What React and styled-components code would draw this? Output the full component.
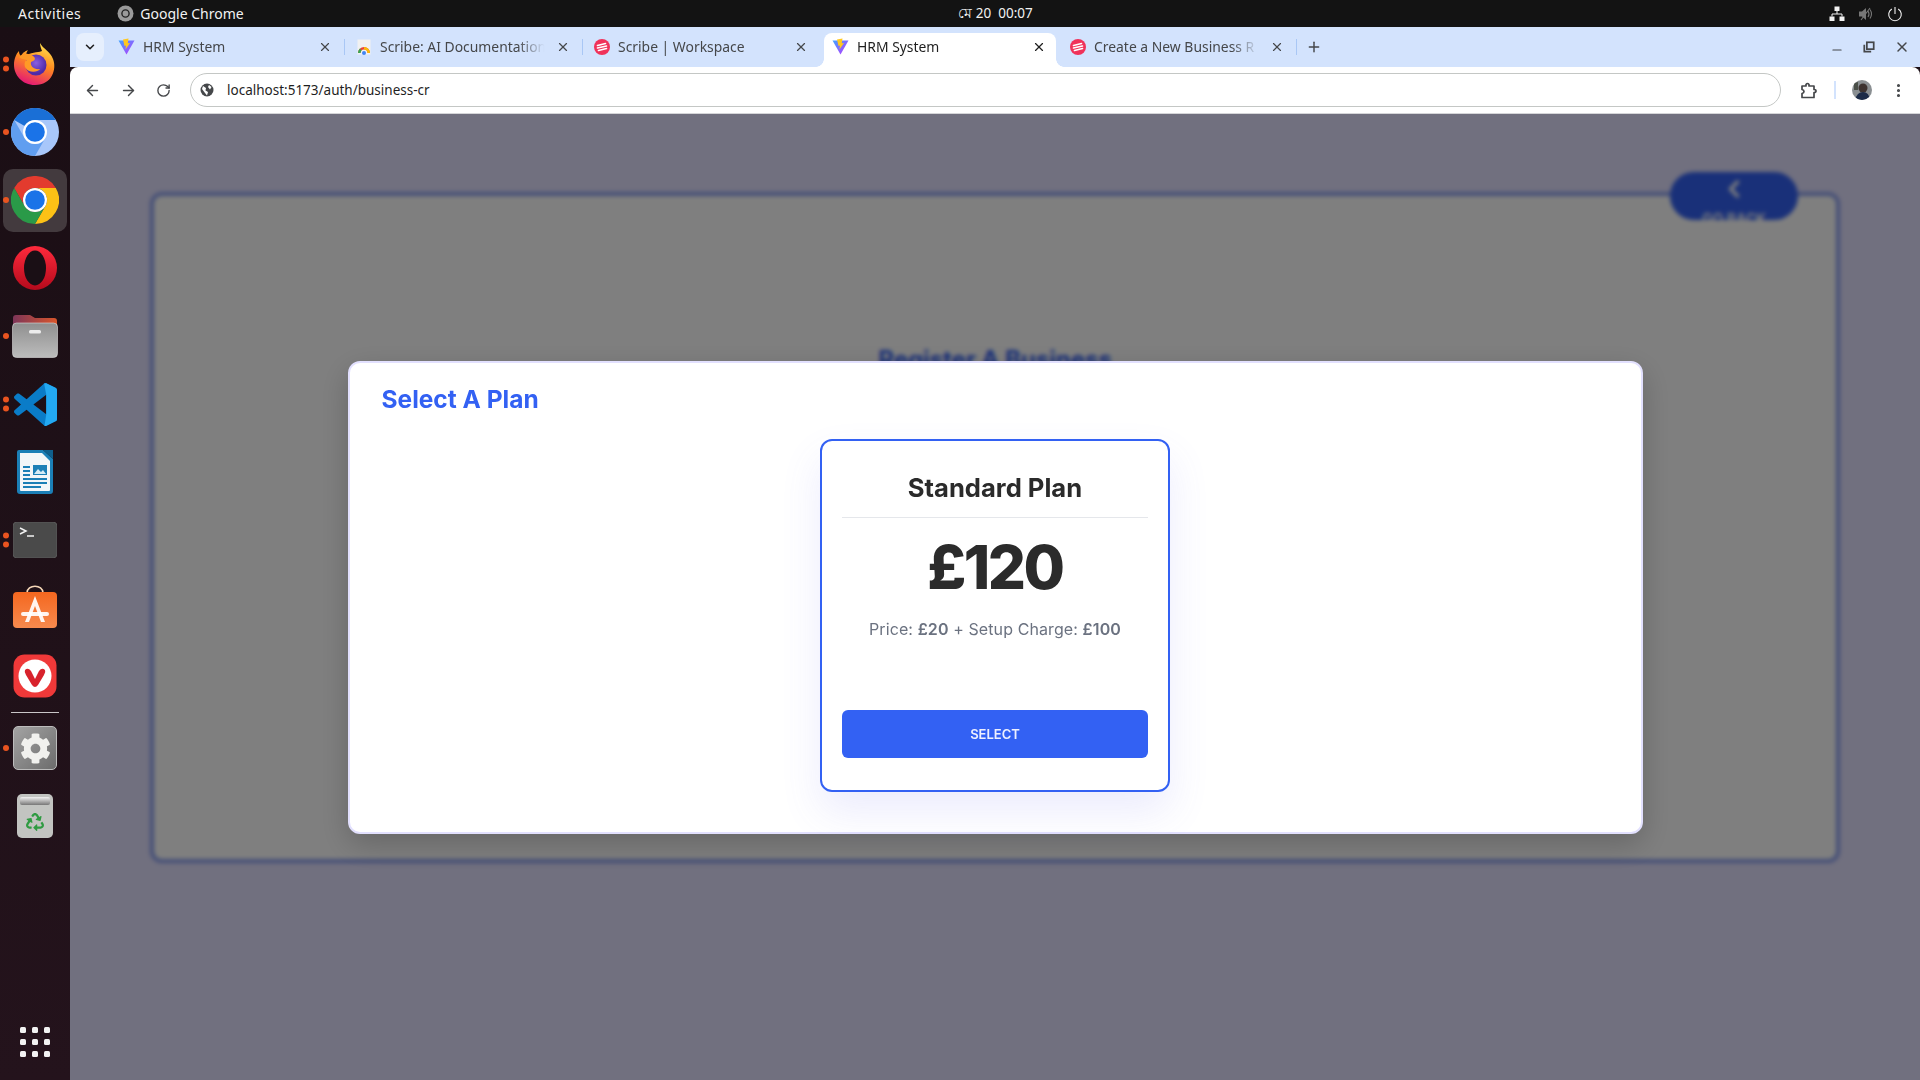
import styled, { createGlobalStyle } from "styled-components";
import { ArrowLeft, ArrowRight, RotateCw, X, Plus, ChevronDown, ChevronLeft, EllipsisVertical, Minus } from "lucide-react";
import { FaCog, FaRecycle } from "react-icons/fa";

const GlobalStyle = createGlobalStyle`
	* {
		box-sizing: border-box;
	}
	html, body {
		margin: 0;
		padding: 0;
		width: 1920px;
		height: 1080px;
		overflow: hidden;
		font-family: "Noto Sans", sans-serif;
	}
`;

const BLUE = "#3361f3";
const POPPINS = `"Inter", "Noto Sans", sans-serif`;

const ViteIcon = () => (
	<svg width="17" height="17" viewBox="0 0 17 17">
		<defs>
			<linearGradient id="viteA" x1="0" y1="0" x2="1" y2="1">
				<stop offset="0" stopColor="#41a4ff" />
				<stop offset="1" stopColor="#bd34fe" />
			</linearGradient>
		</defs>
		<path d="M0.5 2.5 L16.5 2.5 L8.5 16.5 Z" fill="url(#viteA)" />
		<path d="M10.5 0.5 L5 1.5 L6.5 8 L8 7.5 L7.5 11.5 L12 5 L9.8 5.3 Z" fill="#ffc81f" />
	</svg>
);

const ScribeIcon = () => (
	<svg width="16" height="16" viewBox="0 0 16 16">
		<circle cx="8" cy="8" r="8" fill="#f0325a" />
		<path d="M3.5 6.5 L11.5 4.5 M3.5 9 L12.5 7 M4.5 11.5 L12.5 9.5" stroke="#fff" strokeWidth="1.6" strokeLinecap="round" />
	</svg>
);

const DocsIcon = () => (
	<svg width="16" height="16" viewBox="0 0 16 16">
		<rect x="1.5" y="0.5" width="13" height="15" fill="#f1f1f1" />
		<path d="M2 14 A6 6 0 0 1 14 14 L11.5 14 A3.5 3.5 0 0 0 4.5 14 Z" fill="#ea4335" />
		<path d="M8 8 A6 6 0 0 1 14 14 L11.5 14 A3.5 3.5 0 0 0 8 10.5 Z" fill="#fbbc04" />
		<path d="M2 14 A6 6 0 0 1 4 9.6 L5.6 11.4 A3.5 3.5 0 0 0 4.5 14 Z" fill="#34a853" />
		<circle cx="8" cy="14" r="2" fill="#4285f4" />
	</svg>
);

const tabs = [
	{ title: "HRM System", icon: <ViteIcon />, divider: true },
	{ title: "Scribe: AI Documentation", icon: <DocsIcon />, divider: true },
	{ title: "Scribe | Workspace", icon: <ScribeIcon />, divider: false },
	{ title: "HRM System", icon: <ViteIcon />, active: true, divider: false },
	{ title: "Create a New Business R", icon: <ScribeIcon />, divider: true },
];

const Firefox = () => (
	<svg width="44" height="44" viewBox="0 0 44 44">
		<defs>
			<linearGradient id="ffA" x1="0.7" y1="0" x2="0.3" y2="1">
				<stop offset="0" stopColor="#ffe14d" />
				<stop offset="0.45" stopColor="#ff8a1f" />
				<stop offset="1" stopColor="#e3127a" />
			</linearGradient>
			<radialGradient id="ffB" cx="0.5" cy="0.4">
				<stop offset="0" stopColor="#8a5fe0" />
				<stop offset="1" stopColor="#4f2aa8" />
			</radialGradient>
		</defs>
		<path d="M27 1 C30 7 37 9 40 17 C44 27 39 43 22 43 C9 43 1 33 1 23 C1 17 3 12 6 9 C6 12 7 13 8 14 C10 10 13 9 15 8 C13 11 13 12 14 13 C19 10 28 10 29 9 C28 6 27 4 27 1 Z" fill="url(#ffA)" />
		<circle cx="23" cy="23" r="10.5" fill="url(#ffB)" />
		<path d="M6 15 C10 11 16 11 20 14 C24 17 21 19 18 20 C17 24 21 28 27 27 C24 31 15 31 12 25 C11 21 12 19 14 18 C11 17 8 17 6 15 Z" fill="#ff9a26" />
	</svg>
);

const Chromium = () => (
	<svg width="48" height="48" viewBox="0 0 48 48">
		<circle cx="24" cy="24" r="24" fill="#a8c7fa" />
		<path d="M3.2 12 A24 24 0 0 1 44.8 12 L24 12 A12 12 0 0 0 13.6 18 Z" fill="#1a6fd6" />
		<path d="M3.2 12 A24 24 0 0 0 24 48 L34.4 30 A12 12 0 0 1 13.6 30 Z" fill="#609ef0" />
		<circle cx="24" cy="24" r="12" fill="#fff" />
		<circle cx="24" cy="24" r="9.8" fill="#1a73e8" />
	</svg>
);

const Chrome = () => (
	<svg width="48" height="48" viewBox="0 0 48 48">
		<path d="M3.2 12 A24 24 0 0 1 44.8 12 L24 12 A12 12 0 0 0 13.6 30 Z" fill="#e33b2e" />
		<path d="M44.8 12 A24 24 0 0 1 24 48 L34.4 30 A12 12 0 0 0 24 12 Z" fill="#fcc116" />
		<path d="M3.2 12 A24 24 0 0 0 24 48 L34.4 30 A12 12 0 0 1 13.6 30 Z" fill="#2a9a48" />
		<circle cx="24" cy="24" r="12" fill="#fff" />
		<circle cx="24" cy="24" r="9.8" fill="#1a73e8" />
	</svg>
);

const Opera = () => (
	<svg width="44" height="44" viewBox="0 0 44 44">
		<defs>
			<linearGradient id="opA" x1="0" y1="0" x2="0" y2="1">
				<stop offset="0" stopColor="#ff2a3c" />
				<stop offset="1" stopColor="#b40a1c" />
			</linearGradient>
		</defs>
		<circle cx="22" cy="22" r="22" fill="url(#opA)" />
		<ellipse cx="22" cy="22" rx="11" ry="17.5" fill="#1a0f15" />
	</svg>
);

const Files = () => (
	<svg width="46" height="44" viewBox="0 0 46 44">
		<defs>
			<linearGradient id="flA" x1="0" y1="0" x2="1" y2="0">
				<stop offset="0" stopColor="#7d3558" />
				<stop offset="1" stopColor="#d9562c" />
			</linearGradient>
			<linearGradient id="flB" x1="0" y1="0" x2="0" y2="1">
				<stop offset="0" stopColor="#8f8f8f" />
				<stop offset="1" stopColor="#bcbcbc" />
			</linearGradient>
		</defs>
		<path d="M1 4 Q1 1 4 1 L18 1 L23 4 L42 4 Q45 4 45 7 L45 20 L1 20 Z" fill="url(#flA)" />
		<rect x="0.5" y="9" width="45" height="34.5" rx="4" fill="url(#flB)" stroke="#dcdcdc" strokeWidth="0.6" />
		<rect x="17" y="16" width="12" height="3.4" rx="1.5" fill="#ececec" />
	</svg>
);

const VSCode = () => (
	<svg width="43" height="43" viewBox="0 0 100 100">
		<path
			fillRule="evenodd"
			fill="#0a7cc8"
			d="M70.9119 99.3171C72.4869 99.9307 74.2828 99.8914 75.8725 99.1264L96.4608 89.2197C98.6242 88.1787 100 85.9892 100 83.5872V16.4133C100 14.0113 98.6243 11.8218 96.4609 10.7808L75.8725 0.873756C73.7862 -0.130129 71.3446 0.11576 69.5135 1.44695C69.252 1.63711 69.0028 1.84943 68.769 2.08341L29.3551 38.0415L12.1872 25.0096C10.589 23.7965 8.35363 23.8959 6.86933 25.2461L1.36303 30.2549C-0.452552 31.9064 -0.454633 34.7627 1.35853 36.417L16.2471 50.0001L1.35853 63.5832C-0.454633 65.2374 -0.452552 68.0938 1.36303 69.7453L6.86933 74.7541C8.35363 76.1043 10.589 76.2037 12.1872 74.9905L29.3551 61.9587L68.769 97.9167C69.3925 98.5406 70.1246 99.0104 70.9119 99.3171ZM75.0152 27.2989L45.1091 50.0001L75.0152 72.7012V27.2989Z"
		/>
		<path
			fill="#23a9f2"
			d="M75 0.5 L96.46 10.78 C98.62 11.82 100 14.01 100 16.41 V83.59 C100 85.99 98.62 88.18 96.46 89.22 L75.87 99.13 C74.3 99.89 72.49 99.93 70.91 99.32 L75 72.7 V27.3 L70 1 Z"
		/>
	</svg>
);

const Writer = () => (
	<svg width="38" height="46" viewBox="0 0 38 46">
		<path d="M3 1 L27 1 L37 10 L37 42 Q37 45 34 45 L4 45 Q1 45 1 42 L1 3 Q1 1 3 1 Z" fill="#1b7fb6" />
		<path d="M4 4 L26 4 L34 12 L34 41 Q34 42 33 42 L5 42 Q4 42 4 41 Z" fill="#f2f6f8" />
		<path d="M27 1 L37 1 L37 10 Z" fill="#0f5f8c" />
		<rect x="17" y="16" width="14" height="10" fill="#1b7fb6" />
		<path d="M18 25 L22 20 L25 23 L27 21 L30 25 Z" fill="#d6ecf6" />
		<path d="M7 18 H14 M7 22 H14 M7 26 H14 M7 30 H31 M7 34 H31 M7 38 H25" stroke="#1b7fb6" strokeWidth="1.8" />
	</svg>
);

const Terminal = () => (
	<svg width="44" height="36" viewBox="0 0 44 36">
		<rect x="0" y="0" width="44" height="36" rx="4" fill="#4a4a4a" stroke="#5f5f5f" strokeWidth="0.8" />
		<path d="M7 6 L13 9 L7 12 M14 14 H21" stroke="#f2f2f2" strokeWidth="1.5" fill="none" />
	</svg>
);

const Store = () => (
	<svg width="44" height="44" viewBox="0 0 44 44" style={{ marginTop: -2 }}>
		<defs>
			<linearGradient id="stA" x1="0" y1="0" x2="0" y2="1">
				<stop offset="0" stopColor="#f4671f" />
				<stop offset="1" stopColor="#f78a4e" />
			</linearGradient>
		</defs>
		<path d="M14 8 C14 -1 30 -1 30 8" fill="none" stroke="#f6d7b8" strokeWidth="1.6" />
		<rect x="0" y="7" width="44" height="36" rx="4" fill="url(#stA)" />
		<path d="M22 11 L32 37 H28 L22 21 L16 37 H12 Z" fill="#fff" opacity="0.92" />
		<rect x="8" y="27" width="28" height="4" rx="2" fill="#fff" opacity="0.92" />
	</svg>
);

const Vivaldi = () => (
	<svg width="44" height="44" viewBox="0 0 44 44">
		<rect x="0.5" y="0.5" width="43" height="43" rx="11" fill="#ef3939" />
		<circle cx="22" cy="22" r="16.5" fill="#fff" />
		<path d="M12 16 Q15 13 18 17 L22 25 L26 17 Q29 13 32 16 Q33 18 31 21 L25 31 Q22 35 19 31 L13 21 Q11 18 12 16 Z" fill="#d8222c" />
	</svg>
);

const Settings = () => (
	<SettingsTile>
		<FaCog size={31} color="#f1f1ee" />
	</SettingsTile>
);

const Trash = () => (
	<TrashTile>
		<TrashLid />
		<FaRecycle size={18} color="#2f9b42" />
	</TrashTile>
);

const dockApps = [
	{ icon: <Firefox />, dots: 2 },
	{ icon: <Chromium />, dots: 1 },
	{ icon: <Chrome />, dots: 1, active: true },
	{ icon: <Opera />, dots: 0 },
	{ icon: <Files />, dots: 1 },
	{ icon: <VSCode />, dots: 2 },
	{ icon: <Writer />, dots: 0 },
	{ icon: <Terminal />, dots: 2 },
	{ icon: <Store />, dots: 0 },
	{ icon: <Vivaldi />, dots: 0 },
];

function App() {
	return (
		<>
			<GlobalStyle />
			<Screen>
				<TopBar>
					<TopLeft>
						<Activities>Activities</Activities>
						<AppName>
							<svg width="17" height="17" viewBox="0 0 17 17">
								<circle cx="8.5" cy="8.5" r="8" fill="#9a9a9a" />
								<circle cx="8.5" cy="8.5" r="3.6" fill="none" stroke="#222" strokeWidth="1.4" />
							</svg>
							Google Chrome
						</AppName>
					</TopLeft>
					<Clock>মে 20&nbsp;&nbsp;00:07</Clock>
					<TopRight>
						<svg width="16" height="16" viewBox="0 0 16 16" fill="#f2f2f2">
							<rect x="5.5" y="0.5" width="5" height="4.5" />
							<rect x="0.5" y="10.5" width="5" height="4.5" />
							<rect x="10.5" y="10.5" width="5" height="4.5" />
							<path d="M8 5 V8 M3 10.5 V8 H13 V10.5" stroke="#f2f2f2" fill="none" />
						</svg>
						<svg width="16" height="16" viewBox="0 0 16 16">
							<path d="M1 5.5 H4 L8 2 V14 L4 10.5 H1 Z" fill="#777" />
							<path d="M10 5 Q12 8 10 11 M12 3.5 Q15 8 12 12.5 M3 14 L12 2" stroke="#777" strokeWidth="1.1" fill="none" />
						</svg>
						<svg width="16" height="16" viewBox="0 0 16 16" fill="none" stroke="#f2f2f2" strokeWidth="1.1">
							<path d="M8 1 V8" />
							<path d="M4.8 3 A6.3 6.3 0 1 0 11.2 3" />
						</svg>
					</TopRight>
				</TopBar>
				<Body>
					<Dock>
						{dockApps.map((app, i) => (
							<DockItem key={i} $active={app.active}>
								<DockDots>
									{Array.from({ length: app.dots }).map((_, d) => (
										<DockDot key={d} />
									))}
								</DockDots>
								{app.icon}
							</DockItem>
						))}
						<DockSeparator />
						<DockItem>
							<DockDots>
								<DockDot />
							</DockDots>
							<Settings />
						</DockItem>
						<DockItem>
							<Trash />
						</DockItem>
						<AppGrid>
							{Array.from({ length: 9 }).map((_, i) => (
								<AppGridDot key={i} />
							))}
						</AppGrid>
					</Dock>
					<Browser>
						<TabStrip>
							<TabSearch>
								<ChevronDown size={14} strokeWidth={2.6} color="#1f1f1f" />
							</TabSearch>
							{tabs.map((tab, i) => (
								<Tab key={i} $active={tab.active} $divider={tab.divider}>
									{tab.active && <Flare $side="left" />}
									{tab.active && <Flare $side="right" />}
									{tab.icon}
									<TabTitle $active={tab.active}>{tab.title}</TabTitle>
									<X size={14} strokeWidth={2} color={tab.active ? "#1f1f1f" : "#45474a"} />
								</Tab>
							))}
							<NewTab>
								<Plus size={16} strokeWidth={2.2} color="#45474a" />
							</NewTab>
							<WindowControls>
								<Minus size={14} strokeWidth={2} color="#45474a" style={{ marginTop: 6 }} />
								<svg width="12" height="12" viewBox="0 0 14 14" fill="none" stroke="#45474a" strokeWidth="2">
									<rect x="4.5" y="1.5" width="8" height="8" />
									<path d="M1.5 4.5 V12.5 H9.5" />
								</svg>
								<X size={16} strokeWidth={2.2} color="#45474a" />
							</WindowControls>
						</TabStrip>
						<Toolbar>
							<NavIcons>
								<ArrowLeft size={17} strokeWidth={2} color="#45474a" />
								<ArrowRight size={17} strokeWidth={2} color="#45474a" />
								<RotateCw size={15} strokeWidth={2.2} color="#45474a" />
							</NavIcons>
							<Omnibox>
								<svg width="14" height="14" viewBox="0 0 14 14">
									<circle cx="7" cy="7" r="6.5" fill="#45474a" />
									<path d="M3 3 L6 5 L5.5 7.5 L8 9 L7 12.5 L5 10 L2 6 Z M9 2 L11.5 4 L10 6.5 L8 4 Z" fill="#fff" />
								</svg>
								<UrlText>localhost:5173/auth/business-cr</UrlText>
							</Omnibox>
							<ToolbarRight>
								<svg width="17" height="17" viewBox="0 0 17 17" fill="none" stroke="#45474a" strokeWidth="1.7">
									<path d="M2 4 H6 V2.5 Q7.5 0.5 9 2.5 V4 H14 V7.5 Q16 7.5 16 9 Q16 10.5 14 10.5 V15.5 H2 V11.5 Q4 11 4 9.5 Q4 8 2 7.5 Z" strokeLinejoin="round" />
								</svg>
								<ToolbarDivider />
								<Avatar>
									<svg width="20" height="20" viewBox="0 0 20 20">
										<rect width="20" height="20" fill="#8a8f92" />
										<circle cx="11" cy="8" r="4.5" fill="#3d3330" />
										<path d="M3 20 Q5 12 11 12 Q17 12 18 20 Z" fill="#1c2b48" />
										<path d="M2 3 L6 2 L6 10 L2 10 Z" fill="#4a4f48" />
									</svg>
								</Avatar>
								<EllipsisVertical size={17} strokeWidth={2.4} color="#45474a" />
							</ToolbarRight>
						</Toolbar>
						<Page>
							<FormCard>
								<GoBack>
									<ChevronLeft size={28} strokeWidth={3} color="#fff" />
									<GoBackLabel>GO BACK</GoBackLabel>
								</GoBack>
								<FormTitle>Register A Business</FormTitle>
							</FormCard>
							<Overlay>
								<Modal>
									<ModalTitle>Select A Plan</ModalTitle>
									<PlanRow>
										<PlanCard>
											<PlanName>Standard Plan</PlanName>
											<PlanPrice>£120</PlanPrice>
											<PlanDetail>
												Price: <b>£20</b> + Setup Charge: <b>£100</b>
											</PlanDetail>
											<SelectButton>SELECT</SelectButton>
										</PlanCard>
									</PlanRow>
								</Modal>
							</Overlay>
						</Page>
					</Browser>
				</Body>
			</Screen>
		</>
	);
}

export default App;

const Screen = styled.div`
	width: 1920px;
	height: 1080px;
	display: flex;
	flex-direction: column;
	background: #1d1118;
`;

const TopBar = styled.div`
	height: 27px;
	flex: none;
	background: #131313;
	color: #f2f2f2;
	font-size: 14px;
	display: grid;
	grid-template-columns: 1fr auto 1fr;
	align-items: center;
	padding: 0 17px 0 18px;
`;

const TopLeft = styled.div`
	display: flex;
	align-items: center;
	gap: 36px;
`;

const Activities = styled.span`
	letter-spacing: 0.5px;
`;

const AppName = styled.span`
	display: flex;
	align-items: center;
	gap: 6px;
`;

const Clock = styled.div`
	font-size: 13.5px;
	margin: 1px 0 0 70px;
`;

const TopRight = styled.div`
	display: flex;
	justify-content: flex-end;
	align-items: center;
	gap: 13px;
`;

const Body = styled.div`
	flex: 1;
	display: flex;
	min-height: 0;
`;

const Dock = styled.div`
	width: 70px;
	flex: none;
	display: flex;
	flex-direction: column;
	align-items: center;
	padding-top: 3px;
	background: linear-gradient(180deg, #1a0e14 0%, #24131c 100%);
	position: relative;
`;

const DockItem = styled.div`
	width: 64px;
	height: 68px;
	flex: none;
	position: relative;
	display: flex;
	align-items: center;
	justify-content: center;

	&::before {
		content: "";
		display: ${(props) => (props.$active ? "block" : "none")};
		position: absolute;
		inset: 3px 0 2px 0;
		border-radius: 10px;
		background: #433a3e;
	}

	svg {
		position: relative;
	}
`;

const DockDots = styled.div`
	position: absolute;
	left: 0;
	top: 50%;
	transform: translateY(-50%);
	display: flex;
	flex-direction: column;
	gap: 3px;
	z-index: 1;
`;

const DockDot = styled.span`
	width: 6px;
	height: 6px;
	border-radius: 50%;
	background: #e95420;
`;

const DockSeparator = styled.div`
	width: 48px;
	height: 1px;
	flex: none;
	margin: 2px 0 1px;
	background: #c9c6c8;
`;

const SettingsTile = styled.div`
	width: 44px;
	height: 44px;
	border-radius: 5px;
	background: linear-gradient(135deg, #a3a3a3, #6c6c6c);
	border: 1px solid #bcbcbc;
	display: flex;
	align-items: center;
	justify-content: center;
`;

const TrashTile = styled.div`
	width: 36px;
	height: 44px;
	border-radius: 5px;
	background: #c2c4c1;
	position: relative;
	display: flex;
	align-items: flex-end;
	justify-content: center;
	padding-bottom: 7px;
`;

const TrashLid = styled.div`
	position: absolute;
	top: 3px;
	left: 3px;
	right: 3px;
	height: 8px;
	border-radius: 2px;
	background: linear-gradient(180deg, #f3f3f3, #777);
`;

const AppGrid = styled.div`
	position: absolute;
	left: 20px;
	bottom: 23px;
	display: grid;
	grid-template-columns: repeat(3, 6px);
	gap: 6px;
`;

const AppGridDot = styled.span`
	width: 6px;
	height: 6px;
	border-radius: 1.5px;
	background: #f2f2f2;
`;

const Browser = styled.div`
	flex: 1;
	min-width: 0;
	display: flex;
	flex-direction: column;
`;

const TabStrip = styled.div`
	height: 40px;
	flex: none;
	background: #d3e3fd;
	display: flex;
	align-items: flex-end;
	padding-left: 6px;
`;

const TabSearch = styled.div`
	width: 28px;
	height: 28px;
	margin: 0 3px 6px 0;
	border-radius: 8px;
	background: #e6effd;
	display: flex;
	align-items: center;
	justify-content: center;
`;

const Tab = styled.div`
	width: 232px;
	height: 34px;
	margin: 0 3px;
	padding: 0 10px 7px 8px;
	position: relative;
	display: flex;
	align-items: center;
	gap: 8px;
	border-radius: 8px 8px 0 0;
	background: ${(props) => (props.$active ? "#fff" : "transparent")};

	&::after {
		content: "";
		display: ${(props) => (props.$divider ? "block" : "none")};
		position: absolute;
		right: -3px;
		top: 6px;
		width: 1.5px;
		height: 16px;
		background: #a9c7f5;
	}
`;

const Flare = styled.span`
	position: absolute;
	bottom: 0;
	width: 8px;
	height: 8px;
	${(props) => (props.$side === "left" ? "left: -8px;" : "right: -8px;")}
	background: radial-gradient(
		circle at ${(props) => (props.$side === "left" ? "0 0" : "100% 0")},
		transparent 7.5px,
		#fff 8px
	);
`;

const TabTitle = styled.span`
	flex: 1;
	min-width: 0;
	white-space: nowrap;
	overflow: hidden;
	font-size: 13.9px;
	color: ${(props) => (props.$active ? "#1f1f1f" : "#45474a")};
	-webkit-mask-image: linear-gradient(90deg, #000 82%, transparent 98%);
	mask-image: linear-gradient(90deg, #000 82%, transparent 98%);
`;

const NewTab = styled.div`
	width: 28px;
	height: 28px;
	margin: 0 0 6px 3px;
	display: flex;
	align-items: center;
	justify-content: center;
`;

const WindowControls = styled.div`
	margin-left: auto;
	height: 40px;
	display: flex;
	align-items: center;
	gap: 19px;
	padding-right: 10px;
`;

const Toolbar = styled.div`
	height: 47px;
	flex: none;
	background: #fff;
	border-radius: 8px 8px 0 0;
	border-bottom: 1px solid #d5d5d8;
	display: flex;
	align-items: center;
`;

const NavIcons = styled.div`
	width: 120px;
	display: flex;
	align-items: center;
	gap: 19px;
	padding-left: 14px;
`;

const Omnibox = styled.div`
	width: 1591px;
	height: 34px;
	border: 1px solid #c4c7c5;
	border-radius: 17px;
	display: flex;
	align-items: center;
	gap: 13px;
	padding-left: 9px;
`;

const UrlText = styled.span`
	font-size: 13.5px;
	color: #1f1f1f;
`;

const ToolbarRight = styled.div`
	flex: 1;
	display: flex;
	align-items: center;
	padding-left: 19px;
`;

const ToolbarDivider = styled.span`
	width: 1.5px;
	height: 18px;
	margin: 0 16px 0 17px;
	background: #d3e3fd;
`;

const Avatar = styled.span`
	width: 20px;
	height: 20px;
	margin-right: 18px;
	border-radius: 50%;
	overflow: hidden;
	display: block;
`;

const Page = styled.div`
	flex: 1;
	min-height: 0;
	position: relative;
	overflow: hidden;
	background: #e2e0fe;
	padding: 78px 80px 0 80px;
`;

const FormCard = styled.div`
	height: 671px;
	position: relative;
	background: #fff;
	border: 4px solid #8a9eee;
	border-radius: 12px;
	padding-top: 149px;
	text-align: center;
`;

const GoBack = styled.div`
	position: absolute;
	top: -24px;
	right: 38px;
	width: 128px;
	height: 48px;
	border-radius: 24px;
	background: ${BLUE};
	overflow: hidden;
	display: flex;
	flex-direction: column;
	align-items: center;
	padding-top: 3px;

	svg {
		flex: none;
	}
`;

const GoBackLabel = styled.span`
	flex: none;
	font-family: ${POPPINS};
	font-weight: 600;
	font-size: 14px;
	color: #fff;
	margin-top: 7px;
`;

const FormTitle = styled.h2`
	margin: 0;
	font-family: ${POPPINS};
	font-weight: 700;
	font-size: 24px;
	color: ${BLUE};
`;

const Overlay = styled.div`
	position: absolute;
	inset: 0;
	background: rgba(0, 0, 0, 0.5);
	backdrop-filter: blur(2px);
	display: flex;
	align-items: center;
	justify-content: center;
`;

const Modal = styled.div`
	width: 1295px;
	height: 473px;
	background: #fff;
	border: 2px solid #e2e0fe;
	border-radius: 12px;
	box-shadow: 0 10px 30px rgba(0, 0, 0, 0.2);
	padding: 19px 32px;
`;

const ModalTitle = styled.h2`
	margin: 0;
	font-family: ${POPPINS};
	font-weight: 700;
	font-size: 24.5px;
	line-height: 34px;
	color: ${BLUE};
`;

const PlanRow = styled.div`
	margin-top: 23px;
	display: flex;
	justify-content: center;
`;

const PlanCard = styled.div`
	width: 350px;
	height: 353px;
	background: #fff;
	border: 2px solid ${BLUE};
	border-radius: 12px;
	box-shadow: 0 20px 40px rgba(99, 102, 241, 0.12);
	padding: 20px;
	display: flex;
	flex-direction: column;
	align-items: stretch;
`;

const PlanName = styled.div`
	height: 57px;
	padding-top: 9px;
	border-bottom: 1px solid #e5e7eb;
	text-align: center;
	font-family: ${POPPINS};
	font-weight: 700;
	font-size: 25.6px;
	line-height: 36px;
	color: #2b2b2b;
`;

const PlanPrice = styled.div`
	margin-top: 11px;
	text-align: center;
	font-family: ${POPPINS};
	font-weight: 800;
	font-size: 60px;
	line-height: 76px;
	letter-spacing: -2.5px;
	color: #2b2b2b;
`;

const PlanDetail = styled.div`
	margin-top: 12px;
	text-align: center;
	font-family: ${POPPINS};
	font-size: 16px;
	line-height: 24px;
	letter-spacing: 0.1px;
	color: #6b7280;

	b {
		font-weight: 600;
	}
`;

const SelectButton = styled.button`
	margin-top: auto;
	height: 48px;
	border: 0;
	border-radius: 6px;
	background: ${BLUE};
	color: #eef0ff;
	font-family: ${POPPINS};
	font-weight: 600;
	font-size: 13px;
	margin-bottom: 12px;
`;
